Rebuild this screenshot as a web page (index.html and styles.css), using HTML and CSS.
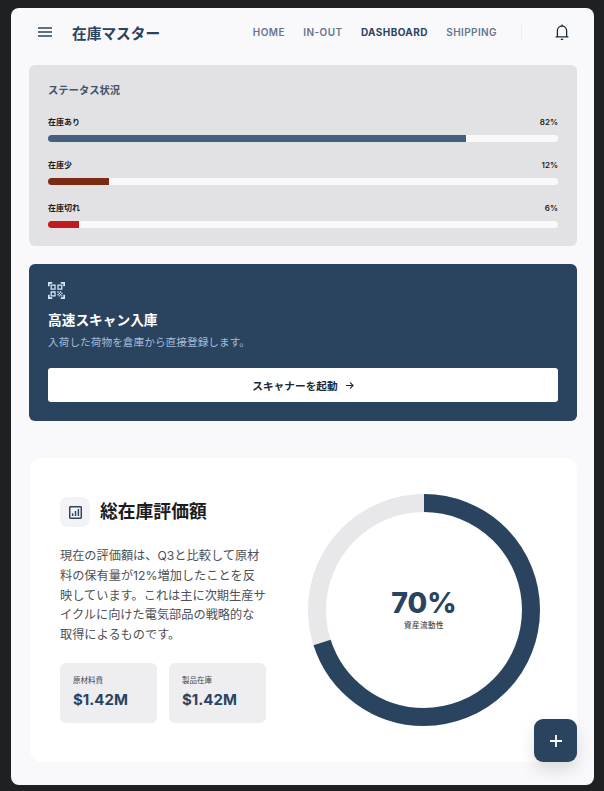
FILE: index.html
```html
<!DOCTYPE html>
<html lang="ja">
<head>
    <meta charset="UTF-8">
    <meta name="viewport" content="width=device-width, initial-scale=1.0">
    <title>在庫マスター</title>
    <link rel="stylesheet" href="styles.css">
</head>
<body>
    <div class="app">
        <header class="topbar">
            <button class="icon-btn menu-btn" aria-label="menu">
                <svg width="18" height="18" viewBox="0 0 18 18"><path d="M2 5h14M2 9h14M2 13h14" stroke="#2a445f" stroke-width="1.4" fill="none"/></svg>
            </button>
            <div class="brand">在庫マスター</div>
            <nav class="nav">
                <a>HOME</a>
                <a>IN-OUT</a>
                <a class="active">DASHBOARD</a>
                <a>SHIPPING</a>
            </nav>
            <div class="divider"></div>
            <button class="icon-btn bell-btn" aria-label="notifications">
                <svg width="14" height="16" viewBox="0 0 14 16" fill="none" stroke="#1a2b3c" stroke-width="1.3"><path d="M.6 12.9h12.8M2.4 12.9V6.6a4.6 4.6 0 0 1 9.2 0v6.3M7 .6V2M5.8 15.3h2.4"/></svg>
            </button>
        </header>

        <main class="content">
            <section class="card status-card">
                <h2 class="status-title">ステータス状況</h2>
                <div class="bar-row">
                    <div class="bar-label"><span>在庫あり</span><span>82%</span></div>
                    <div class="bar-track"><div class="bar-fill fill-ok" style="width: 82%"></div></div>
                </div>
                <div class="bar-row">
                    <div class="bar-label"><span>在庫少</span><span>12%</span></div>
                    <div class="bar-track"><div class="bar-fill fill-low" style="width: 12%"></div></div>
                </div>
                <div class="bar-row">
                    <div class="bar-label"><span>在庫切れ</span><span>6%</span></div>
                    <div class="bar-track"><div class="bar-fill fill-out" style="width: 6%"></div></div>
                </div>
            </section>

            <section class="card scan-card">
                <svg class="scan-icon" width="17" height="17" viewBox="2 2 20 20" fill="#d4e6f8"><path d="M9.5 6.5v3h-3v-3h3M11 5H5v6h6V5zm-1.5 9.5v3h-3v-3h3M11 13H5v6h6v-6zm6.5-6.5v3h-3v-3h3M19 5h-6v6h6V5zm-6 8h1.5v1.5H13V13zm1.5 1.5H16V16h-1.5v-1.5zM16 13h1.5v1.5H16V13zm-3 3h1.5v1.5H13V16zm1.5 1.5H16V19h-1.5v-1.5zM16 16h1.5v1.5H16V16zm1.5-1.5H19V16h-1.5v-1.5zm0 3H19V19h-1.5v-1.5zM22 7h-2V4h-3V2h5v5zm0 15v-5h-2v3h-3v2h5zM2 22h5v-2H4v-3H2v5zM2 2v5h2V4h3V2H2z"/></svg>
                <h2 class="scan-title">高速スキャン入庫</h2>
                <p class="scan-text">入荷した荷物を倉庫から直接登録します。</p>
                <button class="scan-btn">スキャナーを起動
                    <svg width="9" height="9" viewBox="0 0 10 10" fill="none" stroke="#1a2b3c" stroke-width="1.2"><path d="M1 5h8M5.6 1.6 9 5 5.6 8.4"/></svg>
                </button>
            </section>

            <section class="value-card">
                <div class="value-info">
                    <div class="value-head">
                        <div class="value-icon">
                            <svg width="13" height="13" viewBox="3 3 18 18" fill="#2a445f"><path d="M19 3H5c-1.1 0-2 .9-2 2v14c0 1.1.9 2 2 2h14c1.1 0 2-.9 2-2V5c0-1.1-.9-2-2-2zm0 16H5V5h14v14z"/><path d="M7 13h2v4H7zM11 10h2v7h-2zM15 7h2v10h-2z"/></svg>
                        </div>
                        <h2 class="value-title">総在庫評価額</h2>
                    </div>
                    <p class="value-text">現在の評価額は、Q3と比較して原材料の保有量が12%増加したことを反映しています。これは主に次期生産サイクルに向けた電気部品の戦略的な取得によるものです。</p>
                    <div class="stat-grid">
                        <div class="stat">
                            <div class="stat-label">原材料費</div>
                            <div class="stat-value">$1.42M</div>
                        </div>
                        <div class="stat">
                            <div class="stat-label">製品在庫</div>
                            <div class="stat-value">$1.42M</div>
                        </div>
                    </div>
                </div>
                <div class="ring">
                    <svg width="232" height="232" viewBox="0 0 232 232">
                        <circle cx="116" cy="116" r="107" fill="none" stroke="#e8e8ea" stroke-width="18"/>
                        <circle cx="116" cy="116" r="107" fill="none" stroke="#2a445f" stroke-width="18" stroke-dasharray="470.6 672.3" transform="rotate(-90 116 116)"/>
                    </svg>
                    <div class="ring-center">
                        <div class="ring-num">70%</div>
                        <div class="ring-label">資産流動性</div>
                    </div>
                </div>
            </section>
        </main>

        <button class="fab" aria-label="add">
            <svg width="14" height="14" viewBox="0 0 14 14"><path d="M7 1v12M1 7h12" stroke="#fff" stroke-width="1.8"/></svg>
        </button>
    </div>
</body>
</html>
```

FILE: styles.css
```css
* {
    box-sizing: border-box;
}

body {
    margin: 0;
    height: 791px;
    padding: 8px 10px 6px 11px;
    background-color: #1e2024;
    font-family: Inter, "Noto Sans CJK JP", sans-serif;
    overflow: hidden;
}

.app {
    position: relative;
    height: 777px;
    background-color: #f9f9fc;
    border-radius: 8px;
    overflow: hidden;
}

.topbar {
    display: flex;
    align-items: center;
    height: 48px;
    padding: 0 25.5px 0 25px;
}

.icon-btn {
    display: flex;
    padding: 0;
    background: none;
    border: none;
}

.brand {
    margin-left: 18px;
    font-size: 14.7px;
    font-weight: 700;
    color: #2a445f;
}

.nav {
    display: flex;
    gap: 18.5px;
    margin-left: auto;
    font-size: 10px;
    font-weight: 600;
    letter-spacing: 0.4px;
    color: #66758c;
}

.nav .active {
    font-weight: 700;
    color: #2a445f;
}

.divider {
    width: 1px;
    height: 18px;
    margin: 0 32.5px 0 24px;
    background-color: #eeeef1;
}

.content {
    display: flex;
    flex-direction: column;
    padding: 9px 17px 0 18px;
}

.card {
    border-radius: 6px;
    padding: 18px 19px;
}

.status-card {
    height: 181px;
    margin-bottom: 18px;
    background-color: #e2e2e5;
}

.status-title {
    margin: 0 0 18px;
    font-size: 10.3px;
    line-height: 15px;
    font-weight: 600;
    color: #43526a;
}

.bar-row {
    margin-bottom: 17px;
}

.bar-label {
    display: flex;
    justify-content: space-between;
    margin-bottom: 7px;
    font-size: 8px;
    line-height: 12px;
    font-weight: 600;
    color: #1a1c1e;
}

.bar-track {
    height: 7px;
    background-color: #f9f9fc;
    border-radius: 4px;
    overflow: hidden;
}

.bar-fill {
    height: 100%;
}

.fill-ok {
    background-color: #43607f;
}

.fill-low {
    background-color: #7b2a14;
}

.fill-out {
    background-color: #c11a1f;
}

.scan-card {
    height: 157px;
    margin-bottom: 37px;
    background-color: #2a445f;
}

.scan-icon {
    display: block;
    margin-bottom: 1px;
}

.scan-title {
    margin: 11px 0 0;
    font-size: 13.7px;
    line-height: 20px;
    font-weight: 700;
    color: #fff;
}

.scan-text {
    margin: 5px 0 0;
    font-size: 10.7px;
    line-height: 16px;
    color: #a3bcd8;
}

.scan-btn {
    display: flex;
    align-items: center;
    justify-content: center;
    gap: 7px;
    width: 100%;
    height: 34px;
    margin-top: 17px;
    background-color: #fff;
    border: none;
    border-radius: 3px;
    font-family: inherit;
    font-size: 10.7px;
    font-weight: 600;
    color: #1a2b3c;
}

.value-card {
    display: flex;
    justify-content: space-between;
    height: 304px;
    margin-left: 1px;
    padding: 36px 37px 0 30px;
    background-color: #fff;
    border-radius: 12px;
}

.value-info {
    width: 206px;
    padding-top: 3px;
}

.value-head {
    display: flex;
    align-items: center;
    gap: 10px;
}

.value-icon {
    display: flex;
    align-items: center;
    justify-content: center;
    width: 30px;
    height: 30px;
    background-color: #f3f3f6;
    border-radius: 8px;
}

.value-title {
    margin: 0 0 4px;
    font-size: 17.8px;
    font-weight: 700;
    color: #1a1c1e;
}

.value-text {
    margin: 19px 0 0;
    font-size: 12.2px;
    line-height: 19.8px;
    color: #4c5057;
}

.stat-grid {
    display: flex;
    gap: 12px;
    margin-top: 18px;
}

.stat {
    width: 97px;
    height: 60px;
    padding: 12px 13px;
    background-color: #eeedf0;
    border-radius: 6px;
}

.stat-label {
    font-size: 7.5px;
    line-height: 12px;
    color: #43474e;
}

.stat-value {
    margin-top: 3px;
    font-size: 15px;
    line-height: 20px;
    font-weight: 700;
    color: #2a445f;
}

.ring {
    position: relative;
    width: 232px;
    height: 232px;
}

.ring-center {
    position: absolute;
    inset: 0;
    display: flex;
    flex-direction: column;
    align-items: center;
    justify-content: center;
    padding-bottom: 2px;
}

.ring-num {
    margin-bottom: 2px;
    font-size: 28.5px;
    line-height: 32px;
    font-weight: 800;
    color: #2a445f;
}

.ring-label {
    font-size: 7.5px;
    line-height: 10px;
    font-weight: 500;
    letter-spacing: 0.5px;
    color: #43474e;
}

.fab {
    position: absolute;
    right: 17px;
    bottom: 23px;
    display: flex;
    align-items: center;
    justify-content: center;
    width: 43px;
    height: 43px;
    background-color: #2a445f;
    border: none;
    border-radius: 9px;
    box-shadow: 0 8px 16px rgba(0, 0, 0, 0.12);
}
```
